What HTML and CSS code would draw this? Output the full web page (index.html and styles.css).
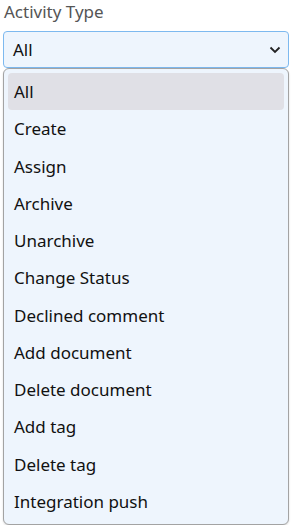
FILE: index.html
```html
<!DOCTYPE html>
<html lang="en">
<head>
    <meta charset="UTF-8">
    <meta name="viewport" content="width=device-width, initial-scale=1.0">
    <title>Activity Type</title>
    <link rel="stylesheet" href="styles.css">
</head>
<body>
    <div class="field">
        <label class="field-label">Activity Type</label>

        <div class="select">
            <span class="select-value">All</span>
            <svg class="chevron" width="12" height="8" viewBox="0 0 12 8">
                <path d="M1.5 1.5 L6 6 L10.5 1.5" fill="none" stroke="#222" stroke-width="1.8"/>
            </svg>
        </div>

        <ul class="options">
            <li class="option active">All</li>
            <li class="option">Create</li>
            <li class="option">Assign</li>
            <li class="option">Archive</li>
            <li class="option">Unarchive</li>
            <li class="option">Change Status</li>
            <li class="option">Declined comment</li>
            <li class="option">Add document</li>
            <li class="option">Delete document</li>
            <li class="option">Add tag</li>
            <li class="option">Delete tag</li>
            <li class="option">Integration push</li>
        </ul>
    </div>
</body>
</html>
```

FILE: styles.css
```css
body {
    margin: 0;
    padding: 0 7px 0 3px;
    font-family: 'Noto Sans', sans-serif;
    background: #ffffff;
    color: #111;
}

.field-label {
    display: block;
    padding: 0 0 0 1px;
    height: 31px;
    font-size: 17px;
    line-height: 24px;
    color: #555;
}

.select {
    display: flex;
    align-items: center;
    justify-content: space-between;
    height: 35px;
    padding: 0 7px 0 9px;
    background: #eef5fd;
    border: 1px solid #7db9ef;
    border-radius: 4px;
    font-size: 17px;
}

.chevron {
    display: block;
}

.options {
    list-style: none;
    margin: 0;
    padding: 4px;
    background: #eef5fd;
    border: 1px solid #a3a3a3;
    border-radius: 6px;
    box-shadow: 0 1px 2px rgba(0, 0, 0, 0.15);
}

.option {
    display: flex;
    align-items: center;
    height: 37.25px;
    padding: 0 6px;
    font-size: 17px;
    border-radius: 4px;
}

.option.active {
    background: #e0e0e6;
}
```
